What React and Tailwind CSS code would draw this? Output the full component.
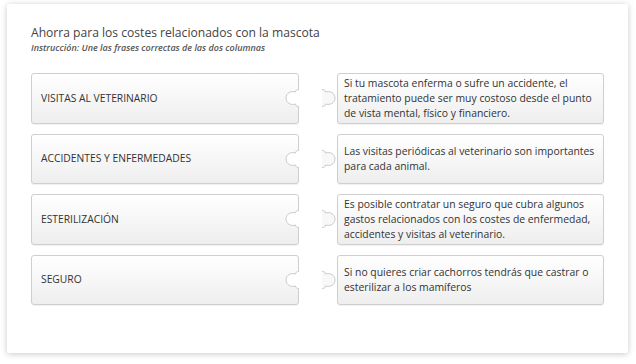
import React from 'react';

const pairs = [
    {
        left: "VISITAS AL VETERINARIO",
        right: "Si tu mascota enferma o sufre un accidente, el tratamiento puede ser muy costoso desde el punto de vista mental, físico y financiero.",
    },
    {
        left: "ACCIDENTES Y ENFERMEDADES",
        right: "Las visitas periódicas al veterinario son importantes para cada animal.",
    },
    {
        left: "ESTERILIZACIÓN",
        right: "Es posible contratar un seguro que cubra algunos gastos relacionados con los costes de enfermedad, accidentes y visitas al veterinario.",
    },
    {
        left: "SEGURO",
        right: "Si no quieres criar cachorros tendrás que castrar o esterilizar a los mamíferos",
    },
];

const piece = "M16,1.5 C13.5,1.5 12.5,2.5 12.5,4 C8,2.5 3,5 3,10 C3,15 8,17.5 12.5,16 C12.5,17.5 13.5,18.5 16,18.5";

function Notch() {
    return (
        <svg width="16" height="20" viewBox="0 0 16 20" className="absolute right-[-1px] top-1/2 -translate-y-1/2">
            <path d={piece} fill="#ffffff" stroke="#cbcbcb" strokeWidth="1" />
        </svg>
    );
}

function Knob() {
    return (
        <svg width="16" height="20" viewBox="0 0 16 20" className="absolute left-[-16px] top-1/2 -translate-y-1/2 -scale-x-100">
            <path d={piece} fill="#f8f8f8" stroke="#cbcbcb" strokeWidth="1" />
        </svg>
    );
}

export default function App() {
    return (
        <div className="w-[636px] h-[364px] bg-white pt-[4px] pl-[7px] font-['Open_Sans',sans-serif]">
            <div className="w-[621px] h-[349px] bg-white rounded-[2px] shadow-[0_1px_6px_rgba(0,0,0,0.22)] pl-[24px] pt-[20px]">

                {/* heading */}
                <h1 className="text-[12.1px] leading-[18px] text-[#444]">Ahorra para los costes relacionados con la mascota</h1>
                <p className="text-[9px] leading-[12px] italic font-semibold text-[#555]">Instrucción: Une las frases correctas de las dos columnas</p>

                {/* matching rows */}
                <div className="mt-[19px] flex flex-col gap-[10px]">
                    {pairs.map((p) => (
                        <div key={p.left} className="flex items-stretch">
                            <div className="relative w-[268px] h-[50.5px] flex items-center pl-[9px] border border-[#cfcfcf] rounded-[3px] bg-gradient-to-b from-white to-[#eeeeee] shadow-[0_1px_1px_rgba(0,0,0,0.06)] text-[10.3px] text-[#333]">
                                {p.left}
                                <Notch />
                            </div>
                            <div className="relative ml-[38px] w-[267px] h-[50.5px] flex items-center pl-[6px] pr-[6px] border border-[#cfcfcf] rounded-[3px] bg-gradient-to-b from-white to-[#eeeeee] shadow-[0_1px_1px_rgba(0,0,0,0.06)] text-[10.4px] leading-[15px] text-[#333]">
                                <span>{p.right}</span>
                                <Knob />
                            </div>
                        </div>
                    ))}
                </div>
            </div>
        </div>
    );
}
